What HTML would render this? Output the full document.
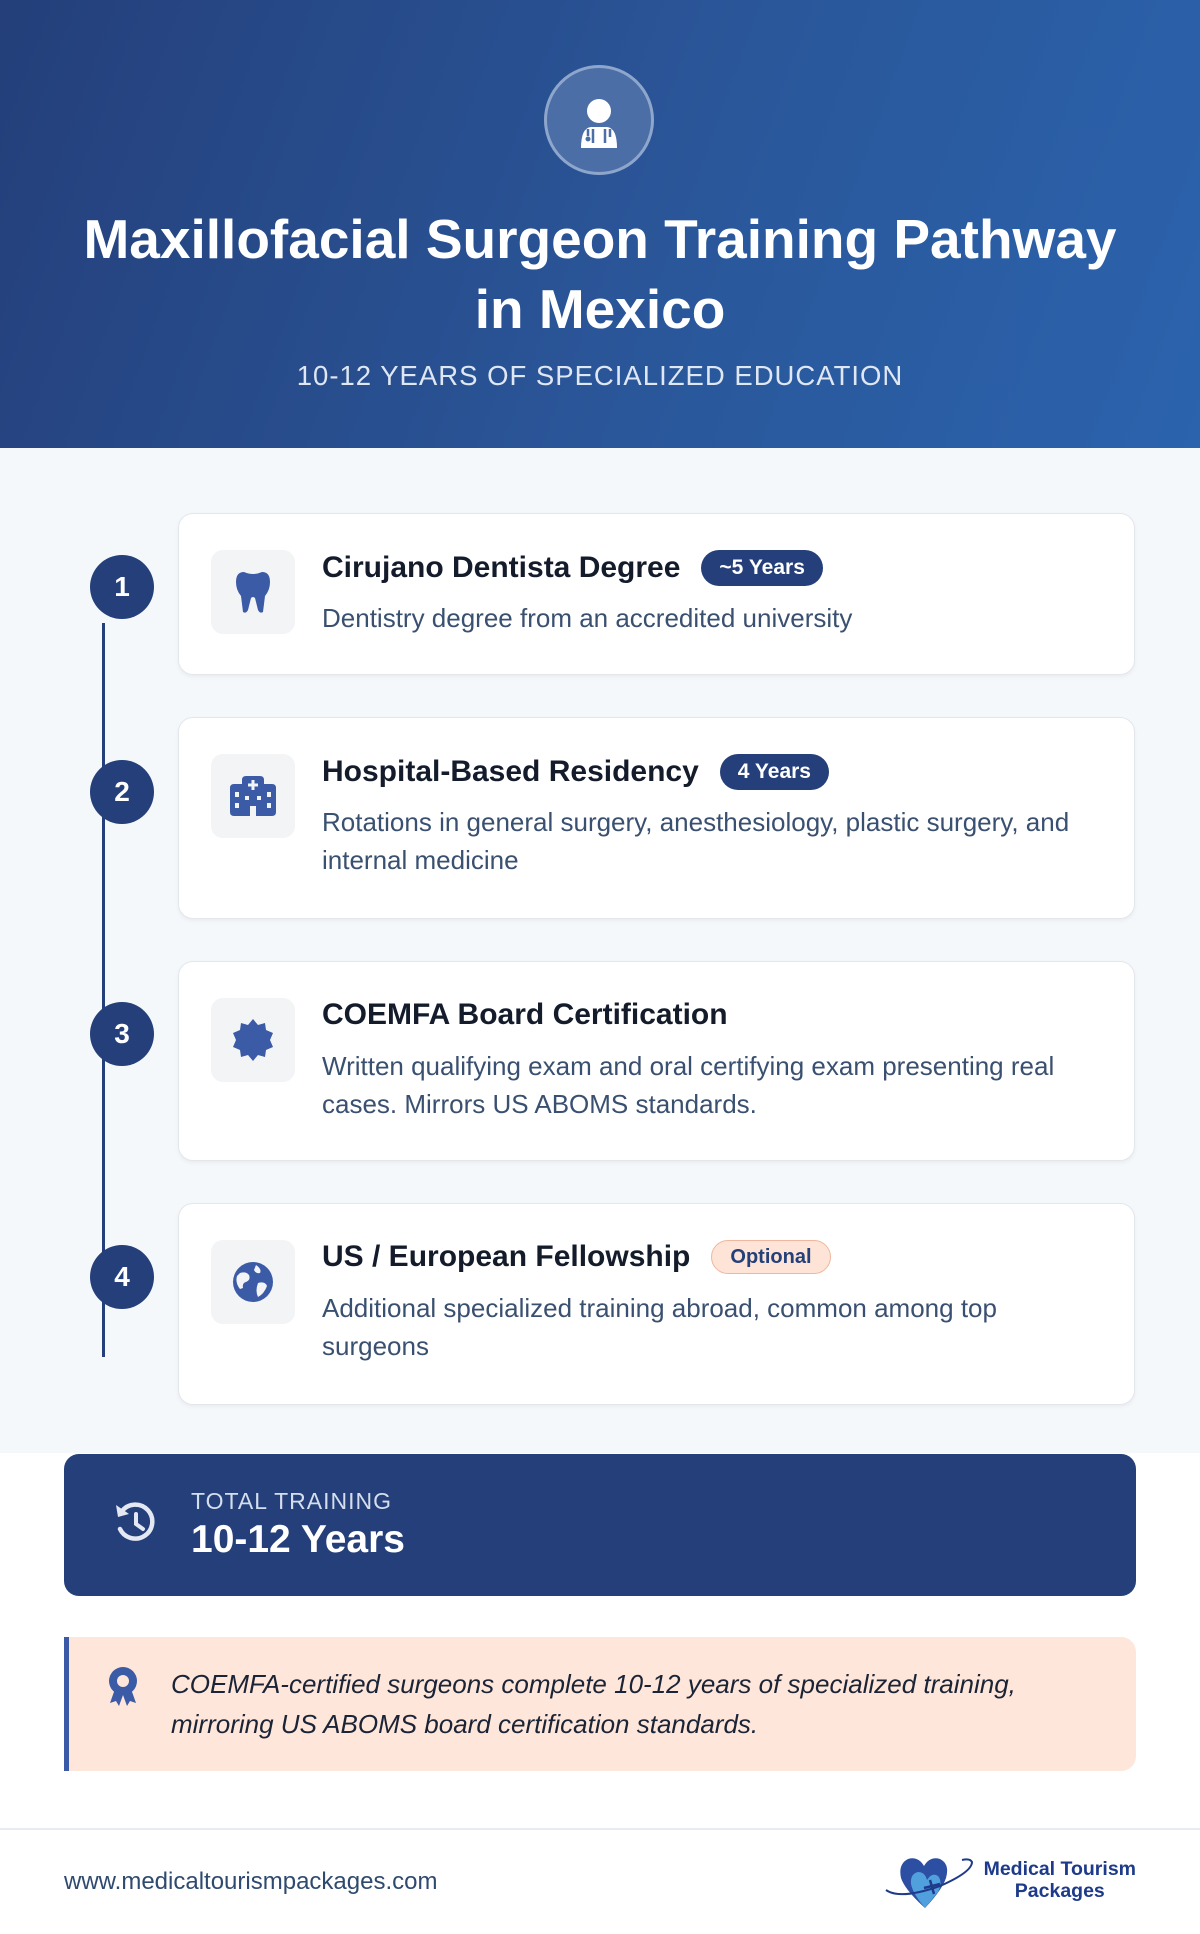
<!DOCTYPE html>
<html><head><meta charset="utf-8"><style>
*{margin:0;padding:0;box-sizing:border-box}
body{width:1200px;height:1934px;font-family:"Liberation Sans",sans-serif;background:#fff;position:relative;overflow:hidden}
.hdr{position:absolute;left:0;top:0;width:1200px;height:448px;background:linear-gradient(110deg,#243f7a 0%,#2a5699 55%,#2b63ad 100%)}
.av{position:absolute;left:544px;top:65px;width:110px;height:110px;border-radius:50%;background:#4b6ea6;border:3px solid #8ea6cc}
.h1{position:absolute;left:0;width:1200px;text-align:center;color:#fff;font-weight:bold;font-size:55px;line-height:70px;top:204px}
.sub{position:absolute;left:0;width:1200px;text-align:center;color:#dfe7f3;font-size:27.5px;top:360px;letter-spacing:1px}
.tl{position:absolute;left:0;top:448px;width:1200px;height:1005px;background:#f5f8fb}
.line{position:absolute;left:102px;top:623px;width:3px;height:734px;background:#243f7a}
.num{position:absolute;left:90px;width:64px;height:64px;border-radius:50%;background:#243f7a;color:#fff;font-weight:bold;font-size:28px;line-height:64px;text-align:center}
.card{position:absolute;left:178px;width:957px;background:#fff;border:1px solid #e3e7ec;border-radius:15px;box-shadow:0 2px 4px rgba(0,0,0,.05)}
.ib{position:absolute;left:32px;top:36px;width:84px;height:84px;border-radius:12px;background:#f3f4f6;display:flex;align-items:center;justify-content:center}
.ct{position:absolute;left:143px;top:36px;font-size:30px;font-weight:bold;color:#141c2c;white-space:nowrap;display:flex;align-items:center}
.bd{display:inline-block;margin-left:21px;background:#243f7a;color:#fff;font-size:21px;padding:0 18px;height:36px;line-height:36px;border-radius:18px}
.bo{background:#fde4d6;color:#243f7a;border:1.5px solid #efb79e;font-size:20px;line-height:32px;height:34px}
.cd{position:absolute;left:143px;top:85px;width:785px;font-size:26px;line-height:38px;color:#3a5070}
.tot{position:absolute;left:64px;top:1454px;width:1072px;height:142px;background:#243f7a;border-radius:15px}
.note{position:absolute;left:64px;top:1637px;width:1072px;height:134px;background:#fee6da;border-left:5px solid #3a5aa8;border-radius:0 15px 15px 0}
.foot{position:absolute;left:0;top:1828px;width:1200px;height:2px;background:#e8ebef}
</style></head><body>
<div class="hdr">
 <div class="av"><svg width="104" height="104" viewBox="0 0 104 104" style="position:absolute;left:0;top:0">
  <circle cx="52" cy="43" r="12" fill="#fff"/>
  <path d="M34 80 Q34 60 44 59 L60 59 Q70 60 70 80 Z" fill="#fff"/>
  <path d="M41 61 v7 M46 61 q0 10 0 14 M58 61 v14 M63 61 v8" stroke="#4b6ea6" stroke-width="2.5" fill="none"/>
  <circle cx="41" cy="71" r="2.5" fill="#4b6ea6"/><rect x="36" y="75" width="32" height="3" fill="#fff"/>
 </svg></div>
 <div class="h1">Maxillofacial Surgeon Training Pathway<br>in Mexico</div>
 <div class="sub">10-12 YEARS OF SPECIALIZED EDUCATION</div>
</div>
<div class="tl"></div>
<div class="line"></div>
<div class="num" style="top:555px">1</div>
<div class="num" style="top:760px">2</div>
<div class="num" style="top:1002px">3</div>
<div class="num" style="top:1245px">4</div>

<div class="card" style="top:513px;height:162px">
 <div class="ib"><svg width="38" height="44" viewBox="0 0 38 44"><path d="M10 2 Q19 6 28 2 Q36 2 36 12 Q36 20 31 26 L29 42 Q26 44 24 40 L21 28 Q19 26 17 28 L14 40 Q12 44 9 42 L7 26 Q2 20 2 12 Q2 2 10 2Z" fill="#3b5ba7"/></svg></div>
 <div class="ct">Cirujano Dentista Degree<span class="bd">~5 Years</span></div>
 <div class="cd">Dentistry degree from an accredited university</div>
</div>
<div class="card" style="top:717px;height:202px">
 <div class="ib"><svg width="46" height="40" viewBox="0 0 46 40"><path d="M12 4 Q12 0 16 0 H30 Q34 0 34 4 V8 H42 Q46 8 46 12 V36 Q46 40 42 40 H4 Q0 40 0 36 V12 Q0 8 4 8 H12Z" fill="#3b5ba7"/>
 <path d="M23 4 v10 M18 9 h10" stroke="#f3f4f6" stroke-width="3"/>
 <rect x="5" y="16" width="4" height="5" fill="#f3f4f6"/><rect x="37" y="16" width="4" height="5" fill="#f3f4f6"/><rect x="5" y="27" width="4" height="5" fill="#f3f4f6"/><rect x="37" y="27" width="4" height="5" fill="#f3f4f6"/><rect x="15" y="20" width="4" height="4" fill="#f3f4f6"/><rect x="27" y="20" width="4" height="4" fill="#f3f4f6"/><rect x="20" y="30" width="6" height="10" fill="#f3f4f6"/></svg></div>
 <div class="ct">Hospital-Based Residency<span class="bd">4 Years</span></div>
 <div class="cd">Rotations in general surgery, anesthesiology, plastic surgery, and internal medicine</div>
</div>
<div class="card" style="top:961px;height:200px">
 <div class="ib"><svg width="44" height="44" viewBox="-22 -22 44 44"><polygon points="0,-21 5,-15 12,-17 13,-10 20,-7 17,0 20,7 13,10 12,17 5,15 0,21 -5,15 -12,17 -13,10 -20,7 -17,0 -20,-7 -13,-10 -12,-17 -5,-15" fill="#3b5ba7"/></svg></div>
 <div class="ct">COEMFA Board Certification</div>
 <div class="cd">Written qualifying exam and oral certifying exam presenting real cases. Mirrors US ABOMS standards.</div>
</div>
<div class="card" style="top:1203px;height:202px">
 <div class="ib"><svg width="42" height="42" viewBox="0 0 42 42"><circle cx="21" cy="21" r="20" fill="#3b5ba7"/><path d="M8 12 Q14 10 17 14 Q19 19 14 21 Q10 22 11 27 L8 28 Q3 22 5 15Z M24 4 Q30 8 28 12 Q24 13 22 9Z M26 22 Q33 20 35 25 Q32 33 26 36 Q23 30 26 22Z" fill="#f3f4f6"/></svg></div>
 <div class="ct">US / European Fellowship<span class="bd bo">Optional</span></div>
 <div class="cd">Additional specialized training abroad, common among top surgeons</div>
</div>

<div class="tot">
 <svg width="48" height="48" viewBox="0 0 48 48" style="position:absolute;left:48px;top:45px"><path d="M10 12 A17 17 0 1 1 8 30" stroke="#e3e8f2" stroke-width="4.5" fill="none" stroke-linecap="round"/><path d="M4 6 L6 18 L17 15Z" fill="#e3e8f2"/><path d="M24 15 V25 L31 30" stroke="#e3e8f2" stroke-width="4" fill="none" stroke-linecap="round"/></svg>
 <div style="position:absolute;left:127px;top:34px;color:#d5deec;font-size:23px;letter-spacing:1px">TOTAL TRAINING</div>
 <div style="position:absolute;left:127px;top:64px;color:#fff;font-size:39px;font-weight:bold">10-12 Years</div>
</div>

<div class="note">
 <svg width="32" height="42" viewBox="0 0 32 42" style="position:absolute;left:38px;top:28px"><path d="M8 24 L3 38 L9 36 L12 41 L16 30 L20 41 L23 36 L29 38 L24 24Z" fill="#3b5ba7"/><circle cx="16" cy="16" r="14" fill="#3b5ba7"/><circle cx="16" cy="16" r="6" fill="#fee6da"/></svg>
 <div style="position:absolute;left:102px;top:27px;width:900px;font-size:26px;line-height:40px;font-style:italic;color:#1b2436">COEMFA-certified surgeons complete 10-12 years of specialized training, mirroring US ABOMS board certification standards.</div>
</div>

<div class="foot"></div>
<div style="position:absolute;left:64px;top:1868px;font-size:24px;color:#2f4a6f">www.medicaltourismpackages.com</div>
<svg width="100" height="60" viewBox="0 0 100 60" style="position:absolute;left:880px;top:1850px">
 <path d="M45 58 Q25 40 21 28 Q18 14 28 9 Q38 6 44 16 Q50 6 60 9 Q70 14 66 28 Q62 40 45 58Z" fill="#2d4fa3"/>
 <path d="M45 58 Q33 44 31 34 Q30 24 38 22 Q45 22 47 30 Q52 22 58 26 Q63 32 58 42Z" fill="#4fa0dc"/>
 <path d="M6 40 Q20 50 60 36 Q92 22 92 12 Q90 8 82 10" stroke="#1e3a8a" stroke-width="2" fill="none"/>
 <path d="M50 30 L54 44 M44 38 L60 34" stroke="#1e3a8a" stroke-width="2.5"/>
</svg>
<div style="position:absolute;right:64px;top:1858px;text-align:center;font-size:19.5px;font-weight:bold;color:#1e3a8a;line-height:22px">Medical Tourism<br>Packages</div>
</body></html>
